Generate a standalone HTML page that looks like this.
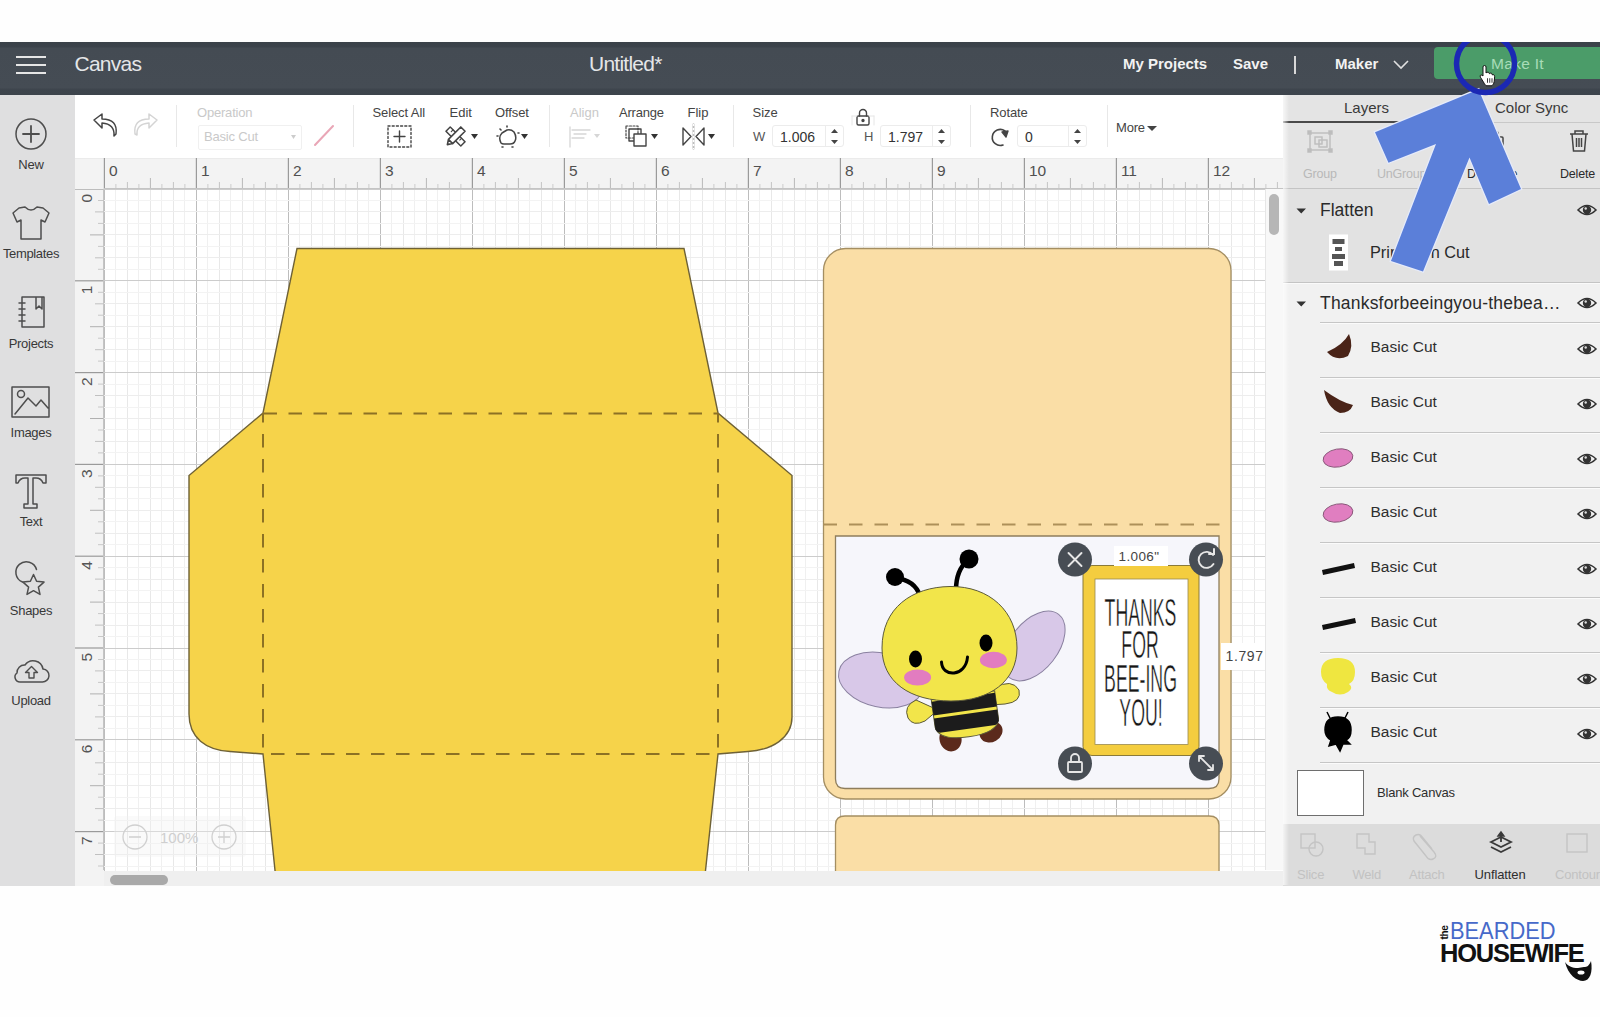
<!DOCTYPE html>
<html><head><meta charset="utf-8">
<style>
*{box-sizing:border-box}
html,body{margin:0;padding:0}
body{width:1600px;height:1017px;overflow:hidden;position:relative;background:#fefefe;font-family:"Liberation Sans",sans-serif;color:#333}
.abs{position:absolute}
.t{position:absolute;white-space:nowrap;line-height:1}
#hdr{left:0;top:42px;width:1600px;height:53px;background:linear-gradient(180deg,#3a4148 0px,#3c434b 5px,#444b53 6px,#454c54 46px,#3e454d 47px,#3d444c 53px)}
#side{left:0;top:95px;width:75px;height:791px;background:#dfdfe0}
#tool{left:75px;top:95px;width:1208px;height:63px;background:#fff}
#rh{left:75px;top:158px;width:1208px;height:31px;background:#f3f3f3;border-top:1px solid #ebebeb}
#rv{left:75px;top:189px;width:29px;height:697px;background:#f3f3f3}
#cv{left:104px;top:189px;width:1179px;height:681px;background:#fff}
#vscr{left:1265px;top:189px;width:18px;height:681px;background:#f8f8f8;border-left:1px solid #e6e6e6}
#hscr{left:104px;top:871px;width:1179px;height:15px;background:#efefef}
#panel{left:1283px;top:95px;width:317px;height:791px;background:#f1f1f1}
</style></head><body>
<div id="hdr" class="abs">
<div class="abs" style="left:16px;top:14px;width:30px;height:2px;background:#e6e6e6"></div>
<div class="abs" style="left:16px;top:22px;width:30px;height:2px;background:#e6e6e6"></div>
<div class="abs" style="left:16px;top:30px;width:30px;height:2px;background:#e6e6e6"></div>
<div class="t" style="left:74.5px;top:11.2px;font-size:21px;color:#e4e6e8;letter-spacing:-0.75px">Canvas</div>
<div class="t" style="left:589px;top:11.2px;font-size:21px;color:#e4e6e8;letter-spacing:-0.75px">Untitled*</div>
<div class="t" style="left:1123px;top:14px;font-size:15px;font-weight:bold;color:#f2f2f2">My Projects</div>
<div class="t" style="left:1233px;top:14px;font-size:15px;font-weight:bold;color:#f2f2f2">Save</div>
<div class="abs" style="left:1294px;top:14px;width:2px;height:18px;background:#d8d8d8"></div>
<div class="t" style="left:1335px;top:14px;font-size:15px;font-weight:bold;color:#f2f2f2">Maker</div>
<svg class="abs" style="left:1392px;top:16px" width="18" height="12"><path d="M2 3 L9 10 L16 3" fill="none" stroke="#e0e0e0" stroke-width="1.6"/></svg>
<div class="abs" style="left:1434px;top:5px;width:170px;height:32px;background:#4b9c69;border-radius:4px"></div>
<div class="t" style="left:1491px;top:13.5px;font-size:15.5px;color:#a8dcb8;letter-spacing:0.3px">Make It</div>
</div>
<div id="side" class="abs">
<svg class="abs" style="left:0;top:0" width="75" height="790" fill="none" stroke="#4e4e4e" stroke-width="1.5" stroke-linejoin="round" stroke-linecap="round">
<circle cx="31" cy="39" r="15"/><path d="M31 31 V47 M23 39 H39" stroke-width="1.8"/>
<path d="M19 113 L13 118 L17 127 L21 125 L21 144 L41 144 L41 125 L45 127 L49 118 L43 113 L37 112 Q31 118 25 112 Z"/>
<path d="M22 202 H44 V232 H22 Z M36 202 V214 L39 211 L42 214 V202 M19 208 H25 M19 214 H25 M19 220 H25 M19 226 H25"/>
<path d="M12 292 H49 V322 H12 Z M15 319 L28 303 L36 311 L41 305 L48 313"/><circle cx="21" cy="299" r="3.5"/>
<path d="M16 380 H46 V388 H43 Q41 383 36 383 H33 V409 H37 V413 H24 V409 H28 V383 H25 Q20 383 18 388 H16 Z"/>
<path d="M36.5 474.5 A10.5 10.5 0 1 0 22.5 487"/><path d="M33.5 479.5 L36.6 486.3 L44.0 487.1 L38.4 492.1 L40.0 499.4 L33.5 495.7 L27.0 499.4 L28.6 492.1 L23.0 487.1 L30.4 486.3 Z" stroke-width="1.5"/>
<path d="M20 587 H42 A6.5 6.5 0 0 0 43 574 A10 10 0 0 0 25 570 A7.5 7.5 0 0 0 17 578 A5 5 0 0 0 20 587 Z"/><path d="M31.5 571.5 L25.5 577.5 H29 V583 H34 V577.5 H37.5 Z" stroke-width="1.4"/>
</svg>
<div class="t" style="left:0;width:62px;text-align:center;top:63px;font-size:13px;color:#383838;letter-spacing:-0.2px">New</div>
<div class="t" style="left:0;width:62px;text-align:center;top:152px;font-size:13px;color:#383838;letter-spacing:-0.35px">Templates</div>
<div class="t" style="left:0;width:62px;text-align:center;top:242px;font-size:13px;color:#383838;letter-spacing:-0.3px">Projects</div>
<div class="t" style="left:0;width:62px;text-align:center;top:331px;font-size:13px;color:#383838;letter-spacing:-0.3px">Images</div>
<div class="t" style="left:0;width:62px;text-align:center;top:420px;font-size:13px;color:#383838;letter-spacing:-0.3px">Text</div>
<div class="t" style="left:0;width:62px;text-align:center;top:509px;font-size:13px;color:#383838;letter-spacing:-0.3px">Shapes</div>
<div class="t" style="left:0;width:62px;text-align:center;top:599px;font-size:13px;color:#383838;letter-spacing:-0.3px">Upload</div>
</div>
<div id="tool" class="abs"><svg class="abs" style="left:0;top:0" width="1208" height="63" fill="none" stroke="#444" stroke-width="1.4" stroke-linejoin="round" stroke-linecap="round">
<g transform="translate(-75,-95)">
<path d="M114 136 Q115 124 102 123 L102 128 L94 120 L102 114 L102 119 Q118 119 116 134 Z" stroke-width="1.5"/>
<path d="M137 135 Q136 124 149 123 L149 128 L157 120 L149 114 L149 119 Q133 119 135 134 Z" stroke="#d4d4d4" stroke-width="1.5"/>
<path d="M315 145 L333 126" stroke="#e9a6b6" stroke-width="2"/>
<path d="M291 135 L296 135 L293.5 139 Z" fill="#ccc" stroke="none"/>
<rect x="388" y="126" width="23" height="21" stroke-dasharray="2 2.2" stroke-width="1.4"/>
<path d="M399.5 131 V142 M394 136.5 H405" stroke-width="1.4"/>
<g transform="rotate(45 455.5 136.5)"><rect x="445" y="133.5" width="21" height="6" stroke-width="1.5" fill="#fff"/><path d="M449 133.5 V136 M453 133.5 V136 M457 133.5 V136 M461 133.5 V136" stroke-width="1.1"/></g><g transform="rotate(-45 455.5 136.5)"><path d="M444 136.5 L448.5 133.5 H466 V139.5 H448.5 Z M448.5 133.5 V139.5" stroke-width="1.6" fill="#fff"/></g>
<path d="M471 134 H478 L474.5 139 Z" fill="#333" stroke="none"/>
<path d="M501 143 Q498 137 502 133 L507 130 Q511 129 514 132 Q517 137 515 141 Q514 144 510 144 H504 Q502 144 501 143 Z" stroke-width="1.5"/>
<path d="M497 136 H498 M507 126 V127 M518 133 H519 M502 147 H503 M512 147 H513 M500 129 L501 130" stroke-width="1.6"/>
<path d="M521 134 H528 L524.5 139 Z" fill="#333" stroke="none"/>
<path d="M572 130 H590 M574 134 H586 M572 138 H584 M570 127 V147" stroke="#d6d6d6" stroke-width="1.3"/>
<path d="M594 134 H600 L597 138 Z" fill="#d6d6d6" stroke="none"/>
<rect x="626" y="126" width="12" height="12" stroke-dasharray="2 1.5" stroke-width="1.2"/>
<rect x="629" y="129" width="12" height="12" stroke-width="1.4"/>
<rect x="634" y="134" width="12" height="12" stroke-width="1.4" fill="#fff"/>
<path d="M651 134 H658 L654.5 139 Z" fill="#333" stroke="none"/>
<path d="M683 128 L691 136.5 L683 145 Z M704 128 L696 136.5 L704 145 Z M693.5 124 V149" stroke-width="1.4"/>
<path d="M693.5 124 V149" stroke="#fff" stroke-width="1.6" stroke-dasharray="2 2"/>
<path d="M708 134 H715 L711.5 139 Z" fill="#333" stroke="none"/>
<path d="M831 133 L834.5 129 L838 133 Z M831 140 L834.5 144 L838 140 Z" fill="#444" stroke="none"/>
<path d="M938 133 L941.5 129 L945 133 Z M938 140 L941.5 144 L945 140 Z" fill="#444" stroke="none"/>
<path d="M1074 133 L1077.5 129 L1081 133 Z M1074 140 L1077.5 144 L1081 140 Z" fill="#444" stroke="none"/>
<rect x="857" y="116" width="12" height="9" rx="1.5"/>
<path d="M859.5 116 V113 A3.5 3.5 0 0 1 866.5 113 V116"/>
<circle cx="863" cy="120.5" r="1" fill="#444"/>
<path d="M852 116 H857 M869 116 H874 M852 116 V125 M874 116 V125" stroke="#e6e6e6" stroke-width="1"/>
<path d="M1005 131 A8 8 0 1 0 1003 145" stroke-width="1.6"/>
<path d="M1002 132 L1008 131 L1006 137 Z" fill="#444"/>
<path d="M1147 126 H1157 L1152 131 Z" fill="#444" stroke="none"/>
</g></svg><div class="abs" style="left:101px;top:10px;width:1px;height:42px;background:#e8e8e8"></div><div class="abs" style="left:278px;top:10px;width:1px;height:42px;background:#e8e8e8"></div><div class="abs" style="left:474px;top:10px;width:1px;height:42px;background:#e8e8e8"></div><div class="abs" style="left:658px;top:10px;width:1px;height:42px;background:#e8e8e8"></div><div class="abs" style="left:895px;top:10px;width:1px;height:42px;background:#e8e8e8"></div><div class="abs" style="left:1032px;top:10px;width:1px;height:42px;background:#e8e8e8"></div><div class="t" style="left:122.0px;top:10.8px;font-size:13px;color:#c9c9c9;letter-spacing:-0.2px">Operation</div><div class="abs" style="left:123px;top:30px;width:104px;height:25px;border:1px solid #f0f0f0;border-radius:2px"></div><div class="t" style="left:129.0px;top:35.3px;font-size:13px;color:#c9c9c9;letter-spacing:-0.2px">Basic Cut</div><div class="t" style="left:297.5px;top:10.8px;font-size:13px;color:#444;letter-spacing:-0.1px">Select All</div><div class="t" style="left:374.5px;top:10.8px;font-size:13px;color:#444;">Edit</div><div class="t" style="left:420.0px;top:10.8px;font-size:13px;color:#444;letter-spacing:-0.1px">Offset</div><div class="t" style="left:495.0px;top:10.8px;font-size:13px;color:#c9c9c9;">Align</div><div class="t" style="left:544.0px;top:10.8px;font-size:13px;color:#444;letter-spacing:-0.2px">Arrange</div><div class="t" style="left:612.5px;top:10.8px;font-size:13px;color:#444;">Flip</div><div class="t" style="left:677.5px;top:11px;font-size:13px;color:#444;">Size</div><div class="t" style="left:678.0px;top:35.3px;font-size:13px;color:#555;">W</div><div class="t" style="left:789.0px;top:35.3px;font-size:13px;color:#555;">H</div><div class="t" style="left:915.0px;top:11px;font-size:13px;color:#444;letter-spacing:-0.1px">Rotate</div><div class="t" style="left:1041.0px;top:25.8px;font-size:13px;color:#444;letter-spacing:-0.2px">More</div><div class="abs" style="left:697px;top:30px;width:72px;height:22px;border:1px solid #ececec;border-radius:3px"></div><div class="abs" style="left:750px;top:31px;width:1px;height:20px;background:#ececec"></div><div class="t" style="left:705.0px;top:34.8px;font-size:14px;color:#333;">1.006</div><div class="abs" style="left:805px;top:30px;width:71px;height:22px;border:1px solid #ececec;border-radius:3px"></div><div class="abs" style="left:857px;top:31px;width:1px;height:20px;background:#ececec"></div><div class="t" style="left:813.0px;top:34.8px;font-size:14px;color:#333;">1.797</div><div class="abs" style="left:942px;top:30px;width:70px;height:22px;border:1px solid #ececec;border-radius:3px"></div><div class="abs" style="left:993px;top:31px;width:1px;height:20px;background:#ececec"></div><div class="t" style="left:950.0px;top:34.8px;font-size:14px;color:#333;">0</div></div>
<div id="rh" class="abs"></div>
<svg class="abs" style="left:75px;top:158px" width="1208" height="31" font-family="Liberation Sans"><line x1="29.4" y1="0" x2="29.4" y2="31" stroke="#9a9a9a" stroke-width="1.2"/><text x="33.9" y="18" font-size="15.5" fill="#505050">0</text><line x1="40.9" y1="26" x2="40.9" y2="31" stroke="#cccccc" stroke-width="1"/><line x1="52.4" y1="24" x2="52.4" y2="31" stroke="#c4c4c4" stroke-width="1"/><line x1="63.9" y1="26" x2="63.9" y2="31" stroke="#cccccc" stroke-width="1"/><line x1="75.4" y1="20" x2="75.4" y2="31" stroke="#b8b8b8" stroke-width="1"/><line x1="86.9" y1="26" x2="86.9" y2="31" stroke="#cccccc" stroke-width="1"/><line x1="98.4" y1="24" x2="98.4" y2="31" stroke="#c4c4c4" stroke-width="1"/><line x1="109.9" y1="26" x2="109.9" y2="31" stroke="#cccccc" stroke-width="1"/><line x1="121.4" y1="0" x2="121.4" y2="31" stroke="#9a9a9a" stroke-width="1.2"/><text x="125.9" y="18" font-size="15.5" fill="#505050">1</text><line x1="132.9" y1="26" x2="132.9" y2="31" stroke="#cccccc" stroke-width="1"/><line x1="144.4" y1="24" x2="144.4" y2="31" stroke="#c4c4c4" stroke-width="1"/><line x1="155.9" y1="26" x2="155.9" y2="31" stroke="#cccccc" stroke-width="1"/><line x1="167.4" y1="20" x2="167.4" y2="31" stroke="#b8b8b8" stroke-width="1"/><line x1="178.9" y1="26" x2="178.9" y2="31" stroke="#cccccc" stroke-width="1"/><line x1="190.4" y1="24" x2="190.4" y2="31" stroke="#c4c4c4" stroke-width="1"/><line x1="201.9" y1="26" x2="201.9" y2="31" stroke="#cccccc" stroke-width="1"/><line x1="213.4" y1="0" x2="213.4" y2="31" stroke="#9a9a9a" stroke-width="1.2"/><text x="217.9" y="18" font-size="15.5" fill="#505050">2</text><line x1="224.9" y1="26" x2="224.9" y2="31" stroke="#cccccc" stroke-width="1"/><line x1="236.4" y1="24" x2="236.4" y2="31" stroke="#c4c4c4" stroke-width="1"/><line x1="247.9" y1="26" x2="247.9" y2="31" stroke="#cccccc" stroke-width="1"/><line x1="259.4" y1="20" x2="259.4" y2="31" stroke="#b8b8b8" stroke-width="1"/><line x1="270.9" y1="26" x2="270.9" y2="31" stroke="#cccccc" stroke-width="1"/><line x1="282.4" y1="24" x2="282.4" y2="31" stroke="#c4c4c4" stroke-width="1"/><line x1="293.9" y1="26" x2="293.9" y2="31" stroke="#cccccc" stroke-width="1"/><line x1="305.4" y1="0" x2="305.4" y2="31" stroke="#9a9a9a" stroke-width="1.2"/><text x="309.9" y="18" font-size="15.5" fill="#505050">3</text><line x1="316.9" y1="26" x2="316.9" y2="31" stroke="#cccccc" stroke-width="1"/><line x1="328.4" y1="24" x2="328.4" y2="31" stroke="#c4c4c4" stroke-width="1"/><line x1="339.9" y1="26" x2="339.9" y2="31" stroke="#cccccc" stroke-width="1"/><line x1="351.4" y1="20" x2="351.4" y2="31" stroke="#b8b8b8" stroke-width="1"/><line x1="362.9" y1="26" x2="362.9" y2="31" stroke="#cccccc" stroke-width="1"/><line x1="374.4" y1="24" x2="374.4" y2="31" stroke="#c4c4c4" stroke-width="1"/><line x1="385.9" y1="26" x2="385.9" y2="31" stroke="#cccccc" stroke-width="1"/><line x1="397.4" y1="0" x2="397.4" y2="31" stroke="#9a9a9a" stroke-width="1.2"/><text x="401.9" y="18" font-size="15.5" fill="#505050">4</text><line x1="408.9" y1="26" x2="408.9" y2="31" stroke="#cccccc" stroke-width="1"/><line x1="420.4" y1="24" x2="420.4" y2="31" stroke="#c4c4c4" stroke-width="1"/><line x1="431.9" y1="26" x2="431.9" y2="31" stroke="#cccccc" stroke-width="1"/><line x1="443.4" y1="20" x2="443.4" y2="31" stroke="#b8b8b8" stroke-width="1"/><line x1="454.9" y1="26" x2="454.9" y2="31" stroke="#cccccc" stroke-width="1"/><line x1="466.4" y1="24" x2="466.4" y2="31" stroke="#c4c4c4" stroke-width="1"/><line x1="477.9" y1="26" x2="477.9" y2="31" stroke="#cccccc" stroke-width="1"/><line x1="489.4" y1="0" x2="489.4" y2="31" stroke="#9a9a9a" stroke-width="1.2"/><text x="493.9" y="18" font-size="15.5" fill="#505050">5</text><line x1="500.9" y1="26" x2="500.9" y2="31" stroke="#cccccc" stroke-width="1"/><line x1="512.4" y1="24" x2="512.4" y2="31" stroke="#c4c4c4" stroke-width="1"/><line x1="523.9" y1="26" x2="523.9" y2="31" stroke="#cccccc" stroke-width="1"/><line x1="535.4" y1="20" x2="535.4" y2="31" stroke="#b8b8b8" stroke-width="1"/><line x1="546.9" y1="26" x2="546.9" y2="31" stroke="#cccccc" stroke-width="1"/><line x1="558.4" y1="24" x2="558.4" y2="31" stroke="#c4c4c4" stroke-width="1"/><line x1="569.9" y1="26" x2="569.9" y2="31" stroke="#cccccc" stroke-width="1"/><line x1="581.4" y1="0" x2="581.4" y2="31" stroke="#9a9a9a" stroke-width="1.2"/><text x="585.9" y="18" font-size="15.5" fill="#505050">6</text><line x1="592.9" y1="26" x2="592.9" y2="31" stroke="#cccccc" stroke-width="1"/><line x1="604.4" y1="24" x2="604.4" y2="31" stroke="#c4c4c4" stroke-width="1"/><line x1="615.9" y1="26" x2="615.9" y2="31" stroke="#cccccc" stroke-width="1"/><line x1="627.4" y1="20" x2="627.4" y2="31" stroke="#b8b8b8" stroke-width="1"/><line x1="638.9" y1="26" x2="638.9" y2="31" stroke="#cccccc" stroke-width="1"/><line x1="650.4" y1="24" x2="650.4" y2="31" stroke="#c4c4c4" stroke-width="1"/><line x1="661.9" y1="26" x2="661.9" y2="31" stroke="#cccccc" stroke-width="1"/><line x1="673.4" y1="0" x2="673.4" y2="31" stroke="#9a9a9a" stroke-width="1.2"/><text x="677.9" y="18" font-size="15.5" fill="#505050">7</text><line x1="684.9" y1="26" x2="684.9" y2="31" stroke="#cccccc" stroke-width="1"/><line x1="696.4" y1="24" x2="696.4" y2="31" stroke="#c4c4c4" stroke-width="1"/><line x1="707.9" y1="26" x2="707.9" y2="31" stroke="#cccccc" stroke-width="1"/><line x1="719.4" y1="20" x2="719.4" y2="31" stroke="#b8b8b8" stroke-width="1"/><line x1="730.9" y1="26" x2="730.9" y2="31" stroke="#cccccc" stroke-width="1"/><line x1="742.4" y1="24" x2="742.4" y2="31" stroke="#c4c4c4" stroke-width="1"/><line x1="753.9" y1="26" x2="753.9" y2="31" stroke="#cccccc" stroke-width="1"/><line x1="765.4" y1="0" x2="765.4" y2="31" stroke="#9a9a9a" stroke-width="1.2"/><text x="769.9" y="18" font-size="15.5" fill="#505050">8</text><line x1="776.9" y1="26" x2="776.9" y2="31" stroke="#cccccc" stroke-width="1"/><line x1="788.4" y1="24" x2="788.4" y2="31" stroke="#c4c4c4" stroke-width="1"/><line x1="799.9" y1="26" x2="799.9" y2="31" stroke="#cccccc" stroke-width="1"/><line x1="811.4" y1="20" x2="811.4" y2="31" stroke="#b8b8b8" stroke-width="1"/><line x1="822.9" y1="26" x2="822.9" y2="31" stroke="#cccccc" stroke-width="1"/><line x1="834.4" y1="24" x2="834.4" y2="31" stroke="#c4c4c4" stroke-width="1"/><line x1="845.9" y1="26" x2="845.9" y2="31" stroke="#cccccc" stroke-width="1"/><line x1="857.4" y1="0" x2="857.4" y2="31" stroke="#9a9a9a" stroke-width="1.2"/><text x="861.9" y="18" font-size="15.5" fill="#505050">9</text><line x1="868.9" y1="26" x2="868.9" y2="31" stroke="#cccccc" stroke-width="1"/><line x1="880.4" y1="24" x2="880.4" y2="31" stroke="#c4c4c4" stroke-width="1"/><line x1="891.9" y1="26" x2="891.9" y2="31" stroke="#cccccc" stroke-width="1"/><line x1="903.4" y1="20" x2="903.4" y2="31" stroke="#b8b8b8" stroke-width="1"/><line x1="914.9" y1="26" x2="914.9" y2="31" stroke="#cccccc" stroke-width="1"/><line x1="926.4" y1="24" x2="926.4" y2="31" stroke="#c4c4c4" stroke-width="1"/><line x1="937.9" y1="26" x2="937.9" y2="31" stroke="#cccccc" stroke-width="1"/><line x1="949.4" y1="0" x2="949.4" y2="31" stroke="#9a9a9a" stroke-width="1.2"/><text x="953.9" y="18" font-size="15.5" fill="#505050">10</text><line x1="960.9" y1="26" x2="960.9" y2="31" stroke="#cccccc" stroke-width="1"/><line x1="972.4" y1="24" x2="972.4" y2="31" stroke="#c4c4c4" stroke-width="1"/><line x1="983.9" y1="26" x2="983.9" y2="31" stroke="#cccccc" stroke-width="1"/><line x1="995.4" y1="20" x2="995.4" y2="31" stroke="#b8b8b8" stroke-width="1"/><line x1="1006.9" y1="26" x2="1006.9" y2="31" stroke="#cccccc" stroke-width="1"/><line x1="1018.4" y1="24" x2="1018.4" y2="31" stroke="#c4c4c4" stroke-width="1"/><line x1="1029.9" y1="26" x2="1029.9" y2="31" stroke="#cccccc" stroke-width="1"/><line x1="1041.4" y1="0" x2="1041.4" y2="31" stroke="#9a9a9a" stroke-width="1.2"/><text x="1045.9" y="18" font-size="15.5" fill="#505050">11</text><line x1="1052.9" y1="26" x2="1052.9" y2="31" stroke="#cccccc" stroke-width="1"/><line x1="1064.4" y1="24" x2="1064.4" y2="31" stroke="#c4c4c4" stroke-width="1"/><line x1="1075.9" y1="26" x2="1075.9" y2="31" stroke="#cccccc" stroke-width="1"/><line x1="1087.4" y1="20" x2="1087.4" y2="31" stroke="#b8b8b8" stroke-width="1"/><line x1="1098.9" y1="26" x2="1098.9" y2="31" stroke="#cccccc" stroke-width="1"/><line x1="1110.4" y1="24" x2="1110.4" y2="31" stroke="#c4c4c4" stroke-width="1"/><line x1="1121.9" y1="26" x2="1121.9" y2="31" stroke="#cccccc" stroke-width="1"/><line x1="1133.4" y1="0" x2="1133.4" y2="31" stroke="#9a9a9a" stroke-width="1.2"/><text x="1137.9" y="18" font-size="15.5" fill="#505050">12</text><line x1="1144.9" y1="26" x2="1144.9" y2="31" stroke="#cccccc" stroke-width="1"/><line x1="1156.4" y1="24" x2="1156.4" y2="31" stroke="#c4c4c4" stroke-width="1"/><line x1="1167.9" y1="26" x2="1167.9" y2="31" stroke="#cccccc" stroke-width="1"/><line x1="1179.4" y1="20" x2="1179.4" y2="31" stroke="#b8b8b8" stroke-width="1"/><line x1="1190.9" y1="26" x2="1190.9" y2="31" stroke="#cccccc" stroke-width="1"/><line x1="1202.4" y1="24" x2="1202.4" y2="31" stroke="#c4c4c4" stroke-width="1"/><line x1="29" y1="30.5" x2="1208" y2="30.5" stroke="#c4c4c4" stroke-width="1"/></svg>
<div id="rv" class="abs"></div>
<svg class="abs" style="left:75px;top:189px" width="29" height="696" font-family="Liberation Sans"><line x1="0" y1="0.0" x2="29" y2="0.0" stroke="#9a9a9a" stroke-width="1.2"/><text x="0" y="0" font-size="15.5" fill="#555" transform="translate(17,13.5) rotate(-90)">0</text><line x1="23" y1="11.5" x2="29" y2="11.5" stroke="#c8c8c8" stroke-width="1"/><line x1="20" y1="22.9" x2="29" y2="22.9" stroke="#c0c0c0" stroke-width="1"/><line x1="23" y1="34.4" x2="29" y2="34.4" stroke="#c8c8c8" stroke-width="1"/><line x1="15" y1="45.9" x2="29" y2="45.9" stroke="#b0b0b0" stroke-width="1"/><line x1="23" y1="57.4" x2="29" y2="57.4" stroke="#c8c8c8" stroke-width="1"/><line x1="20" y1="68.8" x2="29" y2="68.8" stroke="#c0c0c0" stroke-width="1"/><line x1="23" y1="80.3" x2="29" y2="80.3" stroke="#c8c8c8" stroke-width="1"/><line x1="0" y1="91.8" x2="29" y2="91.8" stroke="#9a9a9a" stroke-width="1.2"/><text x="0" y="0" font-size="15.5" fill="#555" transform="translate(17,105.3) rotate(-90)">1</text><line x1="23" y1="103.3" x2="29" y2="103.3" stroke="#c8c8c8" stroke-width="1"/><line x1="20" y1="114.8" x2="29" y2="114.8" stroke="#c0c0c0" stroke-width="1"/><line x1="23" y1="126.2" x2="29" y2="126.2" stroke="#c8c8c8" stroke-width="1"/><line x1="15" y1="137.7" x2="29" y2="137.7" stroke="#b0b0b0" stroke-width="1"/><line x1="23" y1="149.2" x2="29" y2="149.2" stroke="#c8c8c8" stroke-width="1"/><line x1="20" y1="160.7" x2="29" y2="160.7" stroke="#c0c0c0" stroke-width="1"/><line x1="23" y1="172.1" x2="29" y2="172.1" stroke="#c8c8c8" stroke-width="1"/><line x1="0" y1="183.6" x2="29" y2="183.6" stroke="#9a9a9a" stroke-width="1.2"/><text x="0" y="0" font-size="15.5" fill="#555" transform="translate(17,197.1) rotate(-90)">2</text><line x1="23" y1="195.1" x2="29" y2="195.1" stroke="#c8c8c8" stroke-width="1"/><line x1="20" y1="206.5" x2="29" y2="206.5" stroke="#c0c0c0" stroke-width="1"/><line x1="23" y1="218.0" x2="29" y2="218.0" stroke="#c8c8c8" stroke-width="1"/><line x1="15" y1="229.5" x2="29" y2="229.5" stroke="#b0b0b0" stroke-width="1"/><line x1="23" y1="241.0" x2="29" y2="241.0" stroke="#c8c8c8" stroke-width="1"/><line x1="20" y1="252.4" x2="29" y2="252.4" stroke="#c0c0c0" stroke-width="1"/><line x1="23" y1="263.9" x2="29" y2="263.9" stroke="#c8c8c8" stroke-width="1"/><line x1="0" y1="275.4" x2="29" y2="275.4" stroke="#9a9a9a" stroke-width="1.2"/><text x="0" y="0" font-size="15.5" fill="#555" transform="translate(17,288.9) rotate(-90)">3</text><line x1="23" y1="286.9" x2="29" y2="286.9" stroke="#c8c8c8" stroke-width="1"/><line x1="20" y1="298.3" x2="29" y2="298.3" stroke="#c0c0c0" stroke-width="1"/><line x1="23" y1="309.8" x2="29" y2="309.8" stroke="#c8c8c8" stroke-width="1"/><line x1="15" y1="321.3" x2="29" y2="321.3" stroke="#b0b0b0" stroke-width="1"/><line x1="23" y1="332.8" x2="29" y2="332.8" stroke="#c8c8c8" stroke-width="1"/><line x1="20" y1="344.2" x2="29" y2="344.2" stroke="#c0c0c0" stroke-width="1"/><line x1="23" y1="355.7" x2="29" y2="355.7" stroke="#c8c8c8" stroke-width="1"/><line x1="0" y1="367.2" x2="29" y2="367.2" stroke="#9a9a9a" stroke-width="1.2"/><text x="0" y="0" font-size="15.5" fill="#555" transform="translate(17,380.7) rotate(-90)">4</text><line x1="23" y1="378.7" x2="29" y2="378.7" stroke="#c8c8c8" stroke-width="1"/><line x1="20" y1="390.1" x2="29" y2="390.1" stroke="#c0c0c0" stroke-width="1"/><line x1="23" y1="401.6" x2="29" y2="401.6" stroke="#c8c8c8" stroke-width="1"/><line x1="15" y1="413.1" x2="29" y2="413.1" stroke="#b0b0b0" stroke-width="1"/><line x1="23" y1="424.6" x2="29" y2="424.6" stroke="#c8c8c8" stroke-width="1"/><line x1="20" y1="436.1" x2="29" y2="436.1" stroke="#c0c0c0" stroke-width="1"/><line x1="23" y1="447.5" x2="29" y2="447.5" stroke="#c8c8c8" stroke-width="1"/><line x1="0" y1="459.0" x2="29" y2="459.0" stroke="#9a9a9a" stroke-width="1.2"/><text x="0" y="0" font-size="15.5" fill="#555" transform="translate(17,472.5) rotate(-90)">5</text><line x1="23" y1="470.5" x2="29" y2="470.5" stroke="#c8c8c8" stroke-width="1"/><line x1="20" y1="481.9" x2="29" y2="481.9" stroke="#c0c0c0" stroke-width="1"/><line x1="23" y1="493.4" x2="29" y2="493.4" stroke="#c8c8c8" stroke-width="1"/><line x1="15" y1="504.9" x2="29" y2="504.9" stroke="#b0b0b0" stroke-width="1"/><line x1="23" y1="516.4" x2="29" y2="516.4" stroke="#c8c8c8" stroke-width="1"/><line x1="20" y1="527.9" x2="29" y2="527.9" stroke="#c0c0c0" stroke-width="1"/><line x1="23" y1="539.3" x2="29" y2="539.3" stroke="#c8c8c8" stroke-width="1"/><line x1="0" y1="550.8" x2="29" y2="550.8" stroke="#9a9a9a" stroke-width="1.2"/><text x="0" y="0" font-size="15.5" fill="#555" transform="translate(17,564.3) rotate(-90)">6</text><line x1="23" y1="562.3" x2="29" y2="562.3" stroke="#c8c8c8" stroke-width="1"/><line x1="20" y1="573.8" x2="29" y2="573.8" stroke="#c0c0c0" stroke-width="1"/><line x1="23" y1="585.2" x2="29" y2="585.2" stroke="#c8c8c8" stroke-width="1"/><line x1="15" y1="596.7" x2="29" y2="596.7" stroke="#b0b0b0" stroke-width="1"/><line x1="23" y1="608.2" x2="29" y2="608.2" stroke="#c8c8c8" stroke-width="1"/><line x1="20" y1="619.6" x2="29" y2="619.6" stroke="#c0c0c0" stroke-width="1"/><line x1="23" y1="631.1" x2="29" y2="631.1" stroke="#c8c8c8" stroke-width="1"/><line x1="0" y1="642.6" x2="29" y2="642.6" stroke="#9a9a9a" stroke-width="1.2"/><text x="0" y="0" font-size="15.5" fill="#555" transform="translate(17,656.1) rotate(-90)">7</text><line x1="23" y1="654.1" x2="29" y2="654.1" stroke="#c8c8c8" stroke-width="1"/><line x1="20" y1="665.5" x2="29" y2="665.5" stroke="#c0c0c0" stroke-width="1"/><line x1="23" y1="677.0" x2="29" y2="677.0" stroke="#c8c8c8" stroke-width="1"/><line x1="28.5" y1="0" x2="28.5" y2="681" stroke="#c4c4c4" stroke-width="1"/></svg>
<div id="cv" class="abs"></div>
<svg class="abs" style="left:0;top:0" width="1600" height="1017"><line x1="104.5" y1="189" x2="104.5" y2="871" stroke="#bdbdbd" stroke-width="1"/><line x1="115.5" y1="189" x2="115.5" y2="871" stroke="#f0f0f0" stroke-width="1"/><line x1="127.5" y1="189" x2="127.5" y2="871" stroke="#e8e8e8" stroke-width="1"/><line x1="138.5" y1="189" x2="138.5" y2="871" stroke="#f0f0f0" stroke-width="1"/><line x1="150.5" y1="189" x2="150.5" y2="871" stroke="#e8e8e8" stroke-width="1"/><line x1="161.5" y1="189" x2="161.5" y2="871" stroke="#f0f0f0" stroke-width="1"/><line x1="173.5" y1="189" x2="173.5" y2="871" stroke="#e8e8e8" stroke-width="1"/><line x1="184.5" y1="189" x2="184.5" y2="871" stroke="#f0f0f0" stroke-width="1"/><line x1="196.5" y1="189" x2="196.5" y2="871" stroke="#bdbdbd" stroke-width="1"/><line x1="207.5" y1="189" x2="207.5" y2="871" stroke="#f0f0f0" stroke-width="1"/><line x1="219.5" y1="189" x2="219.5" y2="871" stroke="#e8e8e8" stroke-width="1"/><line x1="230.5" y1="189" x2="230.5" y2="871" stroke="#f0f0f0" stroke-width="1"/><line x1="242.5" y1="189" x2="242.5" y2="871" stroke="#e8e8e8" stroke-width="1"/><line x1="253.5" y1="189" x2="253.5" y2="871" stroke="#f0f0f0" stroke-width="1"/><line x1="265.5" y1="189" x2="265.5" y2="871" stroke="#e8e8e8" stroke-width="1"/><line x1="276.5" y1="189" x2="276.5" y2="871" stroke="#f0f0f0" stroke-width="1"/><line x1="288.5" y1="189" x2="288.5" y2="871" stroke="#bdbdbd" stroke-width="1"/><line x1="299.5" y1="189" x2="299.5" y2="871" stroke="#f0f0f0" stroke-width="1"/><line x1="311.5" y1="189" x2="311.5" y2="871" stroke="#e8e8e8" stroke-width="1"/><line x1="322.5" y1="189" x2="322.5" y2="871" stroke="#f0f0f0" stroke-width="1"/><line x1="334.5" y1="189" x2="334.5" y2="871" stroke="#e8e8e8" stroke-width="1"/><line x1="345.5" y1="189" x2="345.5" y2="871" stroke="#f0f0f0" stroke-width="1"/><line x1="357.5" y1="189" x2="357.5" y2="871" stroke="#e8e8e8" stroke-width="1"/><line x1="368.5" y1="189" x2="368.5" y2="871" stroke="#f0f0f0" stroke-width="1"/><line x1="380.5" y1="189" x2="380.5" y2="871" stroke="#bdbdbd" stroke-width="1"/><line x1="391.5" y1="189" x2="391.5" y2="871" stroke="#f0f0f0" stroke-width="1"/><line x1="403.5" y1="189" x2="403.5" y2="871" stroke="#e8e8e8" stroke-width="1"/><line x1="414.5" y1="189" x2="414.5" y2="871" stroke="#f0f0f0" stroke-width="1"/><line x1="426.5" y1="189" x2="426.5" y2="871" stroke="#e8e8e8" stroke-width="1"/><line x1="437.5" y1="189" x2="437.5" y2="871" stroke="#f0f0f0" stroke-width="1"/><line x1="449.5" y1="189" x2="449.5" y2="871" stroke="#e8e8e8" stroke-width="1"/><line x1="460.5" y1="189" x2="460.5" y2="871" stroke="#f0f0f0" stroke-width="1"/><line x1="472.5" y1="189" x2="472.5" y2="871" stroke="#bdbdbd" stroke-width="1"/><line x1="483.5" y1="189" x2="483.5" y2="871" stroke="#f0f0f0" stroke-width="1"/><line x1="495.5" y1="189" x2="495.5" y2="871" stroke="#e8e8e8" stroke-width="1"/><line x1="506.5" y1="189" x2="506.5" y2="871" stroke="#f0f0f0" stroke-width="1"/><line x1="518.5" y1="189" x2="518.5" y2="871" stroke="#e8e8e8" stroke-width="1"/><line x1="529.5" y1="189" x2="529.5" y2="871" stroke="#f0f0f0" stroke-width="1"/><line x1="541.5" y1="189" x2="541.5" y2="871" stroke="#e8e8e8" stroke-width="1"/><line x1="552.5" y1="189" x2="552.5" y2="871" stroke="#f0f0f0" stroke-width="1"/><line x1="564.5" y1="189" x2="564.5" y2="871" stroke="#bdbdbd" stroke-width="1"/><line x1="575.5" y1="189" x2="575.5" y2="871" stroke="#f0f0f0" stroke-width="1"/><line x1="587.5" y1="189" x2="587.5" y2="871" stroke="#e8e8e8" stroke-width="1"/><line x1="598.5" y1="189" x2="598.5" y2="871" stroke="#f0f0f0" stroke-width="1"/><line x1="610.5" y1="189" x2="610.5" y2="871" stroke="#e8e8e8" stroke-width="1"/><line x1="621.5" y1="189" x2="621.5" y2="871" stroke="#f0f0f0" stroke-width="1"/><line x1="633.5" y1="189" x2="633.5" y2="871" stroke="#e8e8e8" stroke-width="1"/><line x1="644.5" y1="189" x2="644.5" y2="871" stroke="#f0f0f0" stroke-width="1"/><line x1="656.5" y1="189" x2="656.5" y2="871" stroke="#bdbdbd" stroke-width="1"/><line x1="667.5" y1="189" x2="667.5" y2="871" stroke="#f0f0f0" stroke-width="1"/><line x1="679.5" y1="189" x2="679.5" y2="871" stroke="#e8e8e8" stroke-width="1"/><line x1="690.5" y1="189" x2="690.5" y2="871" stroke="#f0f0f0" stroke-width="1"/><line x1="702.5" y1="189" x2="702.5" y2="871" stroke="#e8e8e8" stroke-width="1"/><line x1="713.5" y1="189" x2="713.5" y2="871" stroke="#f0f0f0" stroke-width="1"/><line x1="725.5" y1="189" x2="725.5" y2="871" stroke="#e8e8e8" stroke-width="1"/><line x1="736.5" y1="189" x2="736.5" y2="871" stroke="#f0f0f0" stroke-width="1"/><line x1="748.5" y1="189" x2="748.5" y2="871" stroke="#bdbdbd" stroke-width="1"/><line x1="759.5" y1="189" x2="759.5" y2="871" stroke="#f0f0f0" stroke-width="1"/><line x1="771.5" y1="189" x2="771.5" y2="871" stroke="#e8e8e8" stroke-width="1"/><line x1="782.5" y1="189" x2="782.5" y2="871" stroke="#f0f0f0" stroke-width="1"/><line x1="794.5" y1="189" x2="794.5" y2="871" stroke="#e8e8e8" stroke-width="1"/><line x1="805.5" y1="189" x2="805.5" y2="871" stroke="#f0f0f0" stroke-width="1"/><line x1="817.5" y1="189" x2="817.5" y2="871" stroke="#e8e8e8" stroke-width="1"/><line x1="828.5" y1="189" x2="828.5" y2="871" stroke="#f0f0f0" stroke-width="1"/><line x1="840.5" y1="189" x2="840.5" y2="871" stroke="#bdbdbd" stroke-width="1"/><line x1="851.5" y1="189" x2="851.5" y2="871" stroke="#f0f0f0" stroke-width="1"/><line x1="863.5" y1="189" x2="863.5" y2="871" stroke="#e8e8e8" stroke-width="1"/><line x1="874.5" y1="189" x2="874.5" y2="871" stroke="#f0f0f0" stroke-width="1"/><line x1="886.5" y1="189" x2="886.5" y2="871" stroke="#e8e8e8" stroke-width="1"/><line x1="897.5" y1="189" x2="897.5" y2="871" stroke="#f0f0f0" stroke-width="1"/><line x1="909.5" y1="189" x2="909.5" y2="871" stroke="#e8e8e8" stroke-width="1"/><line x1="920.5" y1="189" x2="920.5" y2="871" stroke="#f0f0f0" stroke-width="1"/><line x1="932.5" y1="189" x2="932.5" y2="871" stroke="#bdbdbd" stroke-width="1"/><line x1="943.5" y1="189" x2="943.5" y2="871" stroke="#f0f0f0" stroke-width="1"/><line x1="955.5" y1="189" x2="955.5" y2="871" stroke="#e8e8e8" stroke-width="1"/><line x1="966.5" y1="189" x2="966.5" y2="871" stroke="#f0f0f0" stroke-width="1"/><line x1="978.5" y1="189" x2="978.5" y2="871" stroke="#e8e8e8" stroke-width="1"/><line x1="989.5" y1="189" x2="989.5" y2="871" stroke="#f0f0f0" stroke-width="1"/><line x1="1001.5" y1="189" x2="1001.5" y2="871" stroke="#e8e8e8" stroke-width="1"/><line x1="1012.5" y1="189" x2="1012.5" y2="871" stroke="#f0f0f0" stroke-width="1"/><line x1="1024.5" y1="189" x2="1024.5" y2="871" stroke="#bdbdbd" stroke-width="1"/><line x1="1035.5" y1="189" x2="1035.5" y2="871" stroke="#f0f0f0" stroke-width="1"/><line x1="1047.5" y1="189" x2="1047.5" y2="871" stroke="#e8e8e8" stroke-width="1"/><line x1="1058.5" y1="189" x2="1058.5" y2="871" stroke="#f0f0f0" stroke-width="1"/><line x1="1070.5" y1="189" x2="1070.5" y2="871" stroke="#e8e8e8" stroke-width="1"/><line x1="1081.5" y1="189" x2="1081.5" y2="871" stroke="#f0f0f0" stroke-width="1"/><line x1="1093.5" y1="189" x2="1093.5" y2="871" stroke="#e8e8e8" stroke-width="1"/><line x1="1104.5" y1="189" x2="1104.5" y2="871" stroke="#f0f0f0" stroke-width="1"/><line x1="1116.5" y1="189" x2="1116.5" y2="871" stroke="#bdbdbd" stroke-width="1"/><line x1="1127.5" y1="189" x2="1127.5" y2="871" stroke="#f0f0f0" stroke-width="1"/><line x1="1139.5" y1="189" x2="1139.5" y2="871" stroke="#e8e8e8" stroke-width="1"/><line x1="1150.5" y1="189" x2="1150.5" y2="871" stroke="#f0f0f0" stroke-width="1"/><line x1="1162.5" y1="189" x2="1162.5" y2="871" stroke="#e8e8e8" stroke-width="1"/><line x1="1173.5" y1="189" x2="1173.5" y2="871" stroke="#f0f0f0" stroke-width="1"/><line x1="1185.5" y1="189" x2="1185.5" y2="871" stroke="#e8e8e8" stroke-width="1"/><line x1="1196.5" y1="189" x2="1196.5" y2="871" stroke="#f0f0f0" stroke-width="1"/><line x1="1208.5" y1="189" x2="1208.5" y2="871" stroke="#bdbdbd" stroke-width="1"/><line x1="1219.5" y1="189" x2="1219.5" y2="871" stroke="#f0f0f0" stroke-width="1"/><line x1="1231.5" y1="189" x2="1231.5" y2="871" stroke="#e8e8e8" stroke-width="1"/><line x1="1242.5" y1="189" x2="1242.5" y2="871" stroke="#f0f0f0" stroke-width="1"/><line x1="1254.5" y1="189" x2="1254.5" y2="871" stroke="#e8e8e8" stroke-width="1"/><line x1="104" y1="189.5" x2="1265" y2="189.5" stroke="#cccccc" stroke-width="1"/><line x1="104" y1="200.5" x2="1265" y2="200.5" stroke="#f3f3f3" stroke-width="1"/><line x1="104" y1="211.5" x2="1265" y2="211.5" stroke="#ededed" stroke-width="1"/><line x1="104" y1="223.5" x2="1265" y2="223.5" stroke="#f3f3f3" stroke-width="1"/><line x1="104" y1="234.5" x2="1265" y2="234.5" stroke="#ededed" stroke-width="1"/><line x1="104" y1="246.5" x2="1265" y2="246.5" stroke="#f3f3f3" stroke-width="1"/><line x1="104" y1="257.5" x2="1265" y2="257.5" stroke="#ededed" stroke-width="1"/><line x1="104" y1="269.5" x2="1265" y2="269.5" stroke="#f3f3f3" stroke-width="1"/><line x1="104" y1="280.5" x2="1265" y2="280.5" stroke="#cccccc" stroke-width="1"/><line x1="104" y1="292.5" x2="1265" y2="292.5" stroke="#f3f3f3" stroke-width="1"/><line x1="104" y1="303.5" x2="1265" y2="303.5" stroke="#ededed" stroke-width="1"/><line x1="104" y1="315.5" x2="1265" y2="315.5" stroke="#f3f3f3" stroke-width="1"/><line x1="104" y1="326.5" x2="1265" y2="326.5" stroke="#ededed" stroke-width="1"/><line x1="104" y1="338.5" x2="1265" y2="338.5" stroke="#f3f3f3" stroke-width="1"/><line x1="104" y1="349.5" x2="1265" y2="349.5" stroke="#ededed" stroke-width="1"/><line x1="104" y1="361.5" x2="1265" y2="361.5" stroke="#f3f3f3" stroke-width="1"/><line x1="104" y1="372.5" x2="1265" y2="372.5" stroke="#cccccc" stroke-width="1"/><line x1="104" y1="384.5" x2="1265" y2="384.5" stroke="#f3f3f3" stroke-width="1"/><line x1="104" y1="395.5" x2="1265" y2="395.5" stroke="#ededed" stroke-width="1"/><line x1="104" y1="407.5" x2="1265" y2="407.5" stroke="#f3f3f3" stroke-width="1"/><line x1="104" y1="418.5" x2="1265" y2="418.5" stroke="#ededed" stroke-width="1"/><line x1="104" y1="429.5" x2="1265" y2="429.5" stroke="#f3f3f3" stroke-width="1"/><line x1="104" y1="441.5" x2="1265" y2="441.5" stroke="#ededed" stroke-width="1"/><line x1="104" y1="452.5" x2="1265" y2="452.5" stroke="#f3f3f3" stroke-width="1"/><line x1="104" y1="464.5" x2="1265" y2="464.5" stroke="#cccccc" stroke-width="1"/><line x1="104" y1="475.5" x2="1265" y2="475.5" stroke="#f3f3f3" stroke-width="1"/><line x1="104" y1="487.5" x2="1265" y2="487.5" stroke="#ededed" stroke-width="1"/><line x1="104" y1="498.5" x2="1265" y2="498.5" stroke="#f3f3f3" stroke-width="1"/><line x1="104" y1="510.5" x2="1265" y2="510.5" stroke="#ededed" stroke-width="1"/><line x1="104" y1="521.5" x2="1265" y2="521.5" stroke="#f3f3f3" stroke-width="1"/><line x1="104" y1="533.5" x2="1265" y2="533.5" stroke="#ededed" stroke-width="1"/><line x1="104" y1="544.5" x2="1265" y2="544.5" stroke="#f3f3f3" stroke-width="1"/><line x1="104" y1="556.5" x2="1265" y2="556.5" stroke="#cccccc" stroke-width="1"/><line x1="104" y1="567.5" x2="1265" y2="567.5" stroke="#f3f3f3" stroke-width="1"/><line x1="104" y1="579.5" x2="1265" y2="579.5" stroke="#ededed" stroke-width="1"/><line x1="104" y1="590.5" x2="1265" y2="590.5" stroke="#f3f3f3" stroke-width="1"/><line x1="104" y1="602.5" x2="1265" y2="602.5" stroke="#ededed" stroke-width="1"/><line x1="104" y1="613.5" x2="1265" y2="613.5" stroke="#f3f3f3" stroke-width="1"/><line x1="104" y1="625.5" x2="1265" y2="625.5" stroke="#ededed" stroke-width="1"/><line x1="104" y1="636.5" x2="1265" y2="636.5" stroke="#f3f3f3" stroke-width="1"/><line x1="104" y1="648.5" x2="1265" y2="648.5" stroke="#cccccc" stroke-width="1"/><line x1="104" y1="659.5" x2="1265" y2="659.5" stroke="#f3f3f3" stroke-width="1"/><line x1="104" y1="670.5" x2="1265" y2="670.5" stroke="#ededed" stroke-width="1"/><line x1="104" y1="682.5" x2="1265" y2="682.5" stroke="#f3f3f3" stroke-width="1"/><line x1="104" y1="693.5" x2="1265" y2="693.5" stroke="#ededed" stroke-width="1"/><line x1="104" y1="705.5" x2="1265" y2="705.5" stroke="#f3f3f3" stroke-width="1"/><line x1="104" y1="716.5" x2="1265" y2="716.5" stroke="#ededed" stroke-width="1"/><line x1="104" y1="728.5" x2="1265" y2="728.5" stroke="#f3f3f3" stroke-width="1"/><line x1="104" y1="739.5" x2="1265" y2="739.5" stroke="#cccccc" stroke-width="1"/><line x1="104" y1="751.5" x2="1265" y2="751.5" stroke="#f3f3f3" stroke-width="1"/><line x1="104" y1="762.5" x2="1265" y2="762.5" stroke="#ededed" stroke-width="1"/><line x1="104" y1="774.5" x2="1265" y2="774.5" stroke="#f3f3f3" stroke-width="1"/><line x1="104" y1="785.5" x2="1265" y2="785.5" stroke="#ededed" stroke-width="1"/><line x1="104" y1="797.5" x2="1265" y2="797.5" stroke="#f3f3f3" stroke-width="1"/><line x1="104" y1="808.5" x2="1265" y2="808.5" stroke="#ededed" stroke-width="1"/><line x1="104" y1="820.5" x2="1265" y2="820.5" stroke="#f3f3f3" stroke-width="1"/><line x1="104" y1="831.5" x2="1265" y2="831.5" stroke="#cccccc" stroke-width="1"/><line x1="104" y1="843.5" x2="1265" y2="843.5" stroke="#f3f3f3" stroke-width="1"/><line x1="104" y1="854.5" x2="1265" y2="854.5" stroke="#ededed" stroke-width="1"/><line x1="104" y1="866.5" x2="1265" y2="866.5" stroke="#f3f3f3" stroke-width="1"/></svg>
<div id="vscr" class="abs"></div>
<div id="hscr" class="abs"></div>
<svg class="abs" style="left:0;top:0" width="1600" height="1017">
<defs><clipPath id="cvclip"><rect x="104" y="189" width="1161" height="682"/></clipPath></defs>
<g clip-path="url(#cvclip)">
<!-- yellow envelope -->
<path d="M297 248.5 L684 248.5 L718 413 L792 475.5 L792 717 C792 738 772 750 748 751.5 L718 754 L704.5 880 L276 880 L263 754 L230 751.5 C206 750 189 738 189 714 L189 475.5 L263 413 Z" fill="#f6d34a" stroke="#6e6136" stroke-width="1.4"/>
<g stroke="#8c7124" stroke-width="2" stroke-dasharray="13.5 11.5">
<path d="M263.5 413.5 H718"/><path d="M263 754 H718" stroke-dashoffset="17"/>
<path d="M263 413 V754" stroke-dashoffset="4"/><path d="M718 413 V754" stroke-dashoffset="4"/></g>
<!-- peach envelope -->
<rect x="823.5" y="248.5" width="407.5" height="550.5" rx="22" fill="#fadea6" stroke="#a48e62" stroke-width="1.3"/>
<path d="M823.5 524.5 H1230" stroke="#ad9059" stroke-width="2" stroke-dasharray="13.5 12"/>
<path d="M835.5 536 H1219 V779 Q1219 788.5 1209 788.5 H845 Q835.5 788.5 835.5 779 Z" fill="#f6f6fb" stroke="#8e7d5c" stroke-width="1.3"/>
<path d="M835.5 880 V825 Q835.5 816 845 816 H1209 Q1219 816 1219 825 V880" fill="#fadea6" stroke="#a48e62" stroke-width="1.3"/>

<!-- bee -->
<g stroke="#5c5a3a" stroke-width="1">
<ellipse cx="881" cy="680" rx="43" ry="27" transform="rotate(12 881 680)" fill="#d8c8e8" stroke="#8a80a0"/>
<ellipse cx="1034" cy="646" rx="40" ry="24" transform="rotate(-52 1034 646)" fill="#d8c8e8" stroke="#8a80a0"/>
<path d="M895 578 Q915 580 920 596" fill="none" stroke="#000" stroke-width="4.5" stroke-linecap="round"/>
<path d="M968 560 Q956 570 956 590" fill="none" stroke="#000" stroke-width="4.5" stroke-linecap="round"/>
<circle cx="895" cy="577" r="9" fill="#000" stroke="none"/>
<circle cx="969" cy="559" r="9.5" fill="#000" stroke="none"/>
<ellipse cx="950.5" cy="739" rx="11" ry="12.5" transform="rotate(-15 950.5 739)" fill="#5b2a1c" stroke="none"/>
<ellipse cx="991" cy="732" rx="12" ry="10" transform="rotate(-30 991 732)" fill="#5b2a1c" stroke="none"/>
<path d="M916 700 Q903 706 908 718 Q913 727 925 721 L938 710 Z" fill="#f2e54a"/>
<path d="M994 688 Q1012 678 1019 690 Q1022 702 1005 704 L990 705 Z" fill="#f2e54a"/>
<g transform="translate(966 717) rotate(-8)">
<path d="M-32 -22 H32 V6 Q30 20 0 20 Q-30 20 -32 6 Z" fill="#f2e54a"/>
<path d="M-32 -20 H32 V-6 H-32 Z" fill="#1c1c1c" stroke="none"/>
<path d="M-32 -3 H32 V8 Q31 11 28 12 H-28 Q-31 11 -32 8 Z" fill="#1c1c1c" stroke="none"/>
</g>
<path d="M950 586.5 C990 586 1017 612 1017 648 C1017 681 990 701 951 701 C910 701 882 682 882 648 C882 608 912 587 950 586.5 Z" fill="#f2e54a"/>
<ellipse cx="915.5" cy="659" rx="6.5" ry="8.5" fill="#000" stroke="none"/>
<ellipse cx="986" cy="643" rx="6.5" ry="8.5" fill="#000" stroke="none"/>
<ellipse cx="917.6" cy="677.5" rx="13.5" ry="8" fill="#e27cc0" stroke="none"/>
<ellipse cx="993.4" cy="660" rx="13.5" ry="8.3" fill="#e27cc0" stroke="none"/>
<path d="M941.5 662 C942 678 966 677 967.5 657" fill="none" stroke="#000" stroke-width="3" stroke-linecap="round"/>
</g>
<!-- text card -->
<rect x="1083" y="565.5" width="116" height="190" rx="9" fill="#f4cd3f" stroke="#8a7a3a" stroke-width="1"/>
<rect x="1095" y="579" width="93" height="165.5" fill="#fff" stroke="#9a8a50" stroke-width="0.8"/>
<g font-family="Liberation Sans" font-size="38.5" fill="#151515" stroke="#fff" stroke-width="0.5" text-anchor="middle">
<text transform="translate(1140.5,625.5) scale(0.46,1)">THANKS</text>
<text transform="translate(1140,658.3) scale(0.46,1)">FOR</text>
<text transform="translate(1140.5,692) scale(0.46,1)">BEE-ING</text>
<text transform="translate(1141,726) scale(0.46,1)">YOU!</text>
</g>
<!-- handles -->
<g fill="#474d54">
<circle cx="1075" cy="559.5" r="17"/><circle cx="1206" cy="559.5" r="17"/>
<circle cx="1075" cy="763.5" r="17"/><circle cx="1206" cy="763.5" r="17"/>
</g>
<g stroke="#e6e6e6" stroke-width="1.9" fill="none" stroke-linecap="round">
<path d="M1068.5 553 L1081.5 566 M1081.5 553 L1068.5 566"/>
<path d="M1213 555 A8 8 0 1 0 1213.5 564"/>
<path d="M1209 554 L1214 554 L1214 549" stroke-width="2"/>
<rect x="1068" y="762" width="14" height="10" rx="1" stroke-width="1.8"/>
<path d="M1071 762 V758 A4 4 0 0 1 1079 758 V762" stroke-width="1.8"/>
<path d="M1199 756 L1213 770 M1199 756 V761 M1199 756 H1204 M1213 770 V765 M1213 770 H1208" stroke-width="1.8"/>
</g>
<rect x="1114" y="546" width="54" height="20" fill="#fff"/>
<text x="1118.5" y="560.5" font-family="Liberation Sans" font-size="13.5" fill="#444" letter-spacing="0.4">1.006"</text>
<rect x="1221" y="643" width="44" height="27" fill="#fff"/>
<text x="1225.5" y="661" font-family="Liberation Sans" font-size="14" fill="#444" letter-spacing="0.6">1.797</text>
</g>
</svg>
<div id="panel" class="abs"><div class="abs" style="left:0;top:0;width:317px;height:94px;background:#e4e4e4"></div><div class="abs" style="left:0;top:26px;width:158px;height:2px;background:#4a4a4a"></div><div class="abs" style="left:158px;top:27px;width:159px;height:1px;background:#c8c8c8"></div><div class="t" style="left:61.0px;top:4.6px;font-size:15px;color:#3a3a3a;">Layers</div><div class="t" style="left:212.0px;top:4.6px;font-size:15px;color:#3a3a3a;">Color Sync</div><div class="t" style="left:20.0px;top:73px;font-size:12.5px;color:#b8b8b8;letter-spacing:-0.2px">Group</div><div class="t" style="left:94.0px;top:73px;font-size:12.5px;color:#b8b8b8;letter-spacing:-0.2px">UnGroup</div><div class="t" style="left:184.0px;top:73px;font-size:12.5px;color:#2a2a2a;letter-spacing:-0.2px">Duplicate</div><div class="t" style="left:277.0px;top:73px;font-size:12.5px;color:#2a2a2a;letter-spacing:-0.2px">Delete</div><div class="abs" style="left:0;top:93px;width:317px;height:1px;background:#c4c4c4"></div><div class="abs" style="left:0;top:94px;width:317px;height:93px;background:#e2e2e2"></div><div class="abs" style="left:0;top:187px;width:317px;height:1px;background:#c4c4c4"></div><div class="abs" style="left:0;top:188px;width:317px;height:1px;background:#fafafa"></div><div class="t" style="left:37.0px;top:107px;font-size:17.5px;color:#2a2a2a;">Flatten</div><div class="t" style="left:87.0px;top:148.8px;font-size:16.3px;color:#2a2a2a;">Print then Cut</div><div class="t" style="left:37.0px;top:199.7px;font-size:17.5px;color:#2a2a2a;letter-spacing:0.2px">Thanksforbeeingyou-thebea…</div><div class="abs" style="left:37px;top:227px;width:280px;height:1px;background:#c6c6c6"></div><div class="abs" style="left:37px;top:228px;width:280px;height:1px;background:#fbfbfb"></div><div class="abs" style="left:37px;top:282px;width:280px;height:1px;background:#c6c6c6"></div><div class="abs" style="left:37px;top:283px;width:280px;height:1px;background:#fbfbfb"></div><div class="abs" style="left:37px;top:337px;width:280px;height:1px;background:#c6c6c6"></div><div class="abs" style="left:37px;top:338px;width:280px;height:1px;background:#fbfbfb"></div><div class="abs" style="left:37px;top:392px;width:280px;height:1px;background:#c6c6c6"></div><div class="abs" style="left:37px;top:393px;width:280px;height:1px;background:#fbfbfb"></div><div class="abs" style="left:37px;top:447px;width:280px;height:1px;background:#c6c6c6"></div><div class="abs" style="left:37px;top:448px;width:280px;height:1px;background:#fbfbfb"></div><div class="abs" style="left:37px;top:502px;width:280px;height:1px;background:#c6c6c6"></div><div class="abs" style="left:37px;top:503px;width:280px;height:1px;background:#fbfbfb"></div><div class="abs" style="left:37px;top:557px;width:280px;height:1px;background:#c6c6c6"></div><div class="abs" style="left:37px;top:558px;width:280px;height:1px;background:#fbfbfb"></div><div class="abs" style="left:37px;top:612px;width:280px;height:1px;background:#c6c6c6"></div><div class="abs" style="left:37px;top:613px;width:280px;height:1px;background:#fbfbfb"></div><div class="abs" style="left:37px;top:667px;width:280px;height:1px;background:#c6c6c6"></div><div class="abs" style="left:37px;top:668px;width:280px;height:1px;background:#fbfbfb"></div><div class="t" style="left:87.5px;top:244.3px;font-size:15.5px;color:#2e2e2e;">Basic Cut</div><div class="t" style="left:87.5px;top:299.3px;font-size:15.5px;color:#2e2e2e;">Basic Cut</div><div class="t" style="left:87.5px;top:354.3px;font-size:15.5px;color:#2e2e2e;">Basic Cut</div><div class="t" style="left:87.5px;top:409.3px;font-size:15.5px;color:#2e2e2e;">Basic Cut</div><div class="t" style="left:87.5px;top:464.3px;font-size:15.5px;color:#2e2e2e;">Basic Cut</div><div class="t" style="left:87.5px;top:519.3px;font-size:15.5px;color:#2e2e2e;">Basic Cut</div><div class="t" style="left:87.5px;top:574.3px;font-size:15.5px;color:#2e2e2e;">Basic Cut</div><div class="t" style="left:87.5px;top:629.3px;font-size:15.5px;color:#2e2e2e;">Basic Cut</div><div class="abs" style="left:13.5px;top:674.5px;width:67px;height:46px;background:#fff;border:1px solid #6e6e6e"></div><div class="t" style="left:94.0px;top:691px;font-size:13px;color:#2e2e2e;letter-spacing:-0.2px">Blank Canvas</div><div class="abs" style="left:0;top:729px;width:317px;height:62px;background:#dcdcdc"></div><div class="t" style="left:14.0px;top:772.5px;font-size:13px;color:#c2c2c2;letter-spacing:-0.2px">Slice</div><div class="t" style="left:69.5px;top:772.5px;font-size:13px;color:#c2c2c2;letter-spacing:-0.2px">Weld</div><div class="t" style="left:126.0px;top:772.5px;font-size:13px;color:#c2c2c2;letter-spacing:-0.2px">Attach</div><div class="t" style="left:191.5px;top:772.5px;font-size:13px;color:#2e2e2e;letter-spacing:-0.1px">Unflatten</div><div class="t" style="left:272.0px;top:772.5px;font-size:13px;color:#c2c2c2;letter-spacing:-0.2px">Contour</div><svg class="abs" style="left:0;top:0" width="317" height="790"><g transform="translate(-1283,-95)">
<g transform="translate(1587,210)"><path d="M-9 0 Q0 -9 9 0 Q0 9 -9 0 Z" fill="none" stroke="#333" stroke-width="1.6"/><circle cx="0" cy="0" r="4.2" fill="#333"/><circle cx="-1.3" cy="-1.5" r="1.2" fill="#ddd"/></g><g transform="translate(1587,303)"><path d="M-9 0 Q0 -9 9 0 Q0 9 -9 0 Z" fill="none" stroke="#333" stroke-width="1.6"/><circle cx="0" cy="0" r="4.2" fill="#333"/><circle cx="-1.3" cy="-1.5" r="1.2" fill="#ddd"/></g><g transform="translate(1587,349)"><path d="M-9 0 Q0 -9 9 0 Q0 9 -9 0 Z" fill="none" stroke="#333" stroke-width="1.6"/><circle cx="0" cy="0" r="4.2" fill="#333"/><circle cx="-1.3" cy="-1.5" r="1.2" fill="#ddd"/></g><g transform="translate(1587,404)"><path d="M-9 0 Q0 -9 9 0 Q0 9 -9 0 Z" fill="none" stroke="#333" stroke-width="1.6"/><circle cx="0" cy="0" r="4.2" fill="#333"/><circle cx="-1.3" cy="-1.5" r="1.2" fill="#ddd"/></g><g transform="translate(1587,459)"><path d="M-9 0 Q0 -9 9 0 Q0 9 -9 0 Z" fill="none" stroke="#333" stroke-width="1.6"/><circle cx="0" cy="0" r="4.2" fill="#333"/><circle cx="-1.3" cy="-1.5" r="1.2" fill="#ddd"/></g><g transform="translate(1587,514)"><path d="M-9 0 Q0 -9 9 0 Q0 9 -9 0 Z" fill="none" stroke="#333" stroke-width="1.6"/><circle cx="0" cy="0" r="4.2" fill="#333"/><circle cx="-1.3" cy="-1.5" r="1.2" fill="#ddd"/></g><g transform="translate(1587,569)"><path d="M-9 0 Q0 -9 9 0 Q0 9 -9 0 Z" fill="none" stroke="#333" stroke-width="1.6"/><circle cx="0" cy="0" r="4.2" fill="#333"/><circle cx="-1.3" cy="-1.5" r="1.2" fill="#ddd"/></g><g transform="translate(1587,624)"><path d="M-9 0 Q0 -9 9 0 Q0 9 -9 0 Z" fill="none" stroke="#333" stroke-width="1.6"/><circle cx="0" cy="0" r="4.2" fill="#333"/><circle cx="-1.3" cy="-1.5" r="1.2" fill="#ddd"/></g><g transform="translate(1587,679)"><path d="M-9 0 Q0 -9 9 0 Q0 9 -9 0 Z" fill="none" stroke="#333" stroke-width="1.6"/><circle cx="0" cy="0" r="4.2" fill="#333"/><circle cx="-1.3" cy="-1.5" r="1.2" fill="#ddd"/></g><g transform="translate(1587,734)"><path d="M-9 0 Q0 -9 9 0 Q0 9 -9 0 Z" fill="none" stroke="#333" stroke-width="1.6"/><circle cx="0" cy="0" r="4.2" fill="#333"/><circle cx="-1.3" cy="-1.5" r="1.2" fill="#ddd"/></g>
<path d="M1296.5 208.5 H1306 L1301.25 213.5 Z M1296.5 301.5 H1306 L1301.25 306.5 Z" fill="#333"/>
<g fill="none" stroke="#bdbdbd" stroke-width="1.4">
<rect x="1310" y="133" width="20" height="17"/><rect x="1315" y="137" width="7" height="7"/><rect x="1319" y="140" width="8" height="7"/>
<path d="M1308 131 h3 v3 h-3z M1329 131 h3 v3 h-3z M1308 149 h3 v3 h-3z M1329 149 h3 v3 h-3z" fill="#bdbdbd"/>
<rect x="1392" y="133" width="9" height="9"/><rect x="1398" y="139" width="9" height="9"/>
</g>
<g fill="none" stroke="#444" stroke-width="1.5">
<rect x="1486" y="132" width="12" height="15" rx="1"/><rect x="1491" y="137" width="12" height="15" rx="1" fill="#e4e4e4"/>
<path d="M1570 134 H1588 M1575 134 V131 H1583 V134 M1572 134 L1573.5 151 H1584.5 L1586 134 M1576.5 138 V147 M1579 138 V147 M1581.5 138 V147"/>
</g>
<rect x="1329" y="234.5" width="19" height="36" fill="#fff"/>
<g fill="#555"><rect x="1332.5" y="239" width="12" height="5"/><rect x="1335" y="247" width="7" height="4"/><rect x="1332" y="254" width="13" height="5"/><rect x="1334" y="261" width="9" height="5"/></g>
<path d="M1349 334 Q1343 345 1327 352 Q1336 362 1348 356 Q1354 346 1349 334 Z" fill="#4a2418"/>
<path d="M1324 390 Q1327 408 1340 413 Q1350 413 1353 405 Q1340 402 1324 390 Z" fill="#4a2418"/>
<ellipse cx="1338" cy="458" rx="15" ry="9" transform="rotate(-10 1338 458)" fill="#e07ec0" stroke="#7a4a6a" stroke-width="0.8"/>
<ellipse cx="1338" cy="513" rx="15" ry="9" transform="rotate(-10 1338 513)" fill="#e07ec0" stroke="#7a4a6a" stroke-width="0.8"/>
<path d="M1322 570 L1354 563 L1355 568 L1323 575 Z" fill="#111"/>
<path d="M1322 625 L1355 618 L1356 623 L1323 630 Z" fill="#111"/>
<path d="M1338 658 Q1355 658 1355 672 Q1355 681 1349 684 Q1354 688 1348 692 Q1340 697 1332 692 Q1326 690 1327 684 Q1321 680 1321 672 Q1321 658 1338 658 Z" fill="#efe640"/>
<path d="M1338 717 Q1351 717 1351 730 Q1351 738 1346 740 L1350 744 L1343 744 L1340 751 L1336 744 L1329 746 L1331 740 Q1325 737 1325 730 Q1325 717 1338 717 Z M1330 718 L1327 712 M1345 718 L1348 712" fill="#000" stroke="#000" stroke-width="1.5"/>
<g fill="none" stroke="#c4c4c4" stroke-width="1.4">
<rect x="1301" y="834" width="14" height="14"/><circle cx="1316" cy="849" r="7"/>
<path d="M1357 834 h12 v8 h6 v12 h-10 v-6 h-8z"/>
<path d="M1420 836 L1434 852 Q1438 857 1433 859 Q1429 861 1426 856 L1414 841 Q1412 837 1416 835 Q1420 833 1423 838 L1432 849"/>
<rect x="1567" y="834" width="20" height="18"/>
</g>
<g fill="none" stroke="#3a3a3a" stroke-width="1.4">
<path d="M1491 842 L1501 837 L1511 842 L1501 847 Z M1491 847 L1501 852 L1511 847 M1501 842 V832" stroke-width="1.8"/><path d="M1498 836 L1501 832 L1504 836 Z" fill="#3a3a3a"/>
</g>
</g></svg><div class="abs" style="left:0;top:0;width:6px;height:790px;background:linear-gradient(90deg,rgba(255,255,255,0.7),rgba(255,255,255,0))"></div></div>
<!-- misc canvas overlays -->
<div class="abs" style="left:1269px;top:194px;width:10px;height:41px;background:#b6b6b6;border-radius:5px"></div>
<div class="abs" style="left:110px;top:875px;width:58px;height:10px;background:#a9a9a9;border-radius:5px"></div>
<div class="abs" style="left:114px;top:816px;width:132px;height:41px;background:rgba(240,240,240,0.35);border-radius:3px"></div>
<svg class="abs" style="left:0;top:0" width="1600" height="1017">
<g fill="none" stroke="#d0d0d0" stroke-width="1.3"><circle cx="135" cy="837" r="12"/><circle cx="224" cy="837" r="12"/><path d="M129 837 H141 M218 837 H230 M224 831 V843"/></g>
<text x="160" y="843" font-family="Liberation Sans" font-size="15" fill="#cfcfcf">100%</text>
<!-- blue arrow -->
<path d="M1478.5 89.5 L1521 189 L1489 204 L1469.5 157.5 L1423 271.5 L1391 261 L1436 144 L1388.5 162.7 L1375 132.2 Z" fill="#5b7fd9" stroke="#e6ebfa" stroke-width="2.5" stroke-linejoin="miter" paint-order="stroke"/>
<!-- blue circle -->
<defs><clipPath id="hclip"><rect x="0" y="42" width="1600" height="1000"/></clipPath></defs><circle clip-path="url(#hclip)" cx="1485.5" cy="63.5" r="29" fill="none" stroke="#1b28b4" stroke-width="5.5"/>
<!-- hand cursor -->
<g transform="translate(1480,65.5) scale(0.75)">
<path d="M4 2 Q4 0 6 0 Q8 0 8 2 L8 10 Q9 8.5 11 9 Q12.5 9.5 12.5 11 Q13.5 9.8 15 10.3 Q16.5 11 16.3 12.5 Q17.5 11.8 18.7 12.6 Q19.8 13.5 19.5 15 L19 21 Q18.5 25 16 27 L8 27 Q6 25 4 21 L0.5 15.5 Q-0.5 13.5 1 12.8 Q2.5 12.2 4 14 Z" fill="#fff" stroke="#111" stroke-width="1.3"/>
<path d="M10 17 V23 M13 17 V23 M16 17 V23" stroke="#111" stroke-width="1.1"/>
</g>
<!-- logo -->
<text transform="translate(1447.5,939.5) rotate(-90)" font-family="Liberation Sans" font-weight="bold" font-size="10" fill="#111" letter-spacing="-0.3">the</text>
<text transform="translate(1450,939) scale(0.895,1)" font-family="Liberation Sans" font-size="24.4" fill="#4669c9">BEARDED</text>
<text x="1440" y="962" font-family="Liberation Sans" font-weight="bold" font-size="25.5" fill="#111" letter-spacing="-1.2">HOUSEWIFE</text>
<path d="M1565 962 C1568 975 1577 981 1583 981 C1590 981 1593 972 1591 961 C1589 966 1587 967 1584 967 L1578 968 C1572 968 1568 966 1565 962 Z" fill="#111"/><ellipse cx="1581" cy="972.5" rx="3.5" ry="2" fill="#fff"/>
</svg>
</body></html>
